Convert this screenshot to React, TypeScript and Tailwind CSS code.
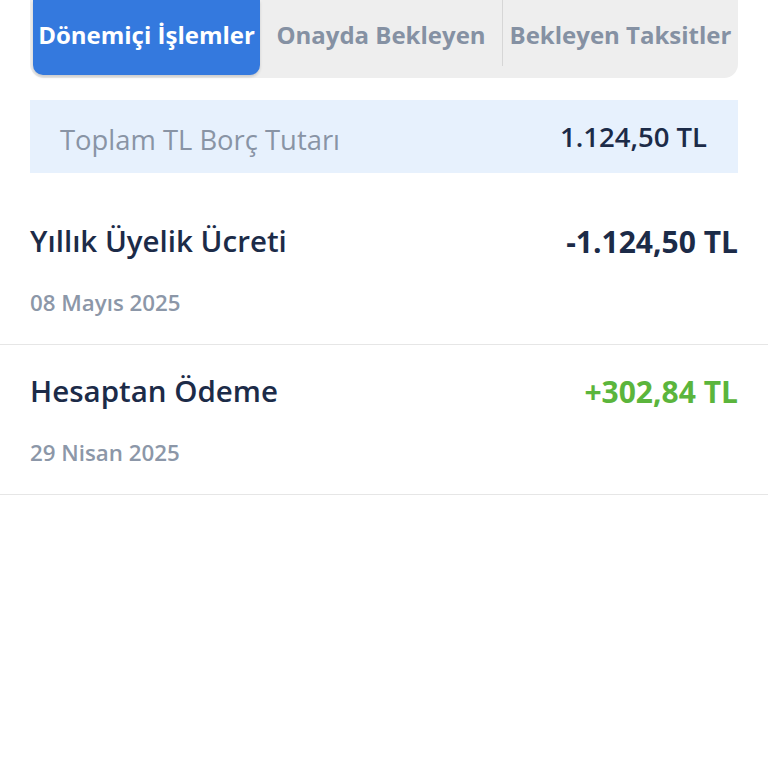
import React from "react";

export default function App() {
  const font = { fontFamily: '"Open Sans", "Noto Sans", sans-serif' };
  return (
    <div className="w-[768px] h-[768px] bg-white overflow-hidden" style={font}>
      <div className="px-[30px]">
        <div className="h-[78px] bg-[#eeeeee] rounded-b-[14px] flex items-stretch relative">
          <div className="ml-[3px] w-[227px] h-[75px] bg-[#3479de] rounded-b-[10px] shadow-[0_2px_3px_rgba(0,0,0,0.15)] flex items-center justify-center">
            <span className="text-white text-[24px] font-bold -mt-[6px] whitespace-nowrap">Dönemiçi İşlemler</span>
          </div>
          <div className="w-[242px] h-[66px] flex items-center justify-center">
            <span className="text-[#8591a3] text-[24px] font-bold mt-[3px] whitespace-nowrap">Onayda Bekleyen</span>
          </div>
          <div className="w-px h-[66px] bg-[#d6d6d6]" />
          <div className="flex-1 h-[66px] flex items-center justify-center">
            <span className="text-[#8591a3] text-[24px] font-bold mt-[3px] whitespace-nowrap">Bekleyen Taksitler</span>
          </div>
        </div>
        <div className="mt-[22px] h-[73px] bg-[#e7f1fd] flex items-center justify-between pl-[30px] pr-[31px]">
          <span className="text-[#8994a5] text-[27.4px] mt-[6px]">Toplam TL Borç Tutarı</span>
          <span className="text-[#1c2b48] text-[27.5px] font-semibold">1.124,50 TL</span>
        </div>
      </div>
      <div className="mt-[22px]">
        {[
          { t: "Yıllık Üyelik Ücreti", a: "-1.124,50 TL", d: "08 Mayıs 2025", c: "text-[#1c2b48]" },
          { t: "Hesaptan Ödeme", a: "+302,84 TL", d: "29 Nisan 2025", c: "text-[#5bb53c]" },
        ].map((r) => (
          <div key={r.t} className="h-[150px] border-b border-[#e6e6e6] px-[30px] pt-[26px]">
            <div className="flex justify-between items-center h-[40px]">
              <span className="text-[#1c2b48] text-[29.5px] font-semibold">{r.t}</span>
              <span className={`${r.c} text-[30px] font-bold`}>{r.a}</span>
            </div>
            <div className="mt-[25px] text-[#8c97a8] text-[22.3px] font-semibold">{r.d}</div>
          </div>
        ))}
      </div>
    </div>
  );
}
